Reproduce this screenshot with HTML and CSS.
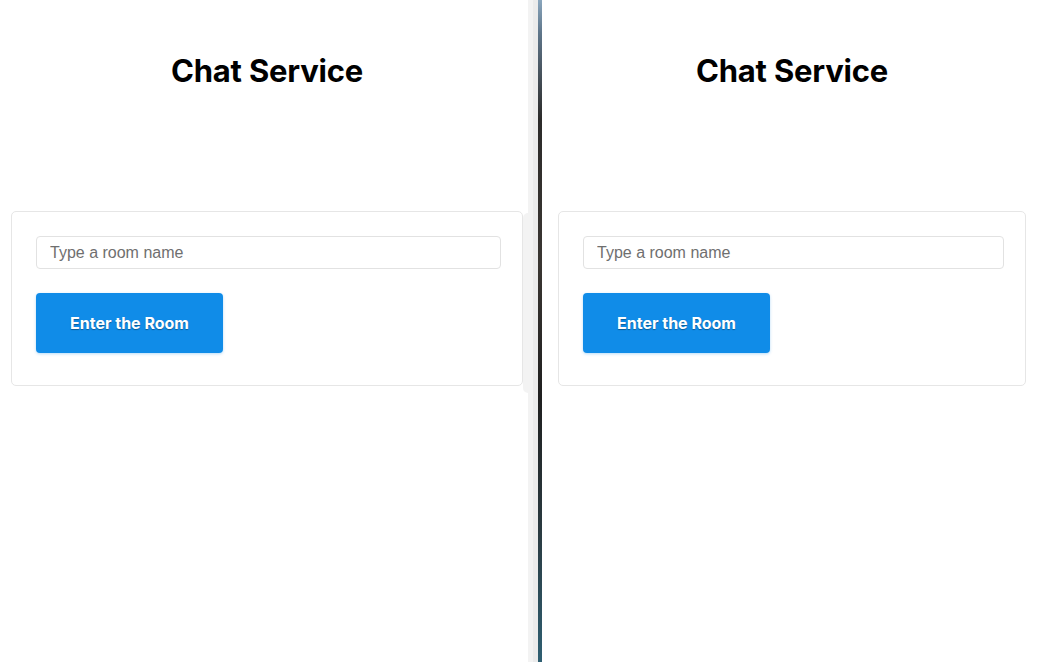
FILE: index.html
```html
<!doctype html>
<html lang="en">
  <head>
    <meta charset="UTF-8" />
    <meta name="viewport" content="width=device-width, initial-scale=1.0" />
    <title>Chat Service</title>
    <link rel="stylesheet" href="styles.css">
  </head>
  <body>
    <div class="desktop">
      <!-- Left window -->
      <div class="window window-left">
        <h1>Chat Service</h1>
        <form class="room-card">
          <input type="text" class="room-input" placeholder="Type a room name" />
          <button type="button" class="room-button">Enter the Room</button>
        </form>
      </div>

      <div class="gutter">
        <span class="gutter-light"></span>
        <span class="gutter-mid"></span>
        <span class="gutter-dark"></span>
      </div>

      <!-- Right window -->
      <div class="window window-right">
        <h1>Chat Service</h1>
        <form class="room-card">
          <input type="text" class="room-input" placeholder="Type a room name" />
          <button type="button" class="room-button">Enter the Room</button>
        </form>
      </div>
    </div>
  </body>
</html>
```

FILE: styles.css
```css
html,
body {
  margin: 0;
  height: 100%;
  background-color: #fff;
}
body {
  font-family: Inter, "Liberation Sans", Arial, sans-serif;
  color: #000;
}
.desktop {
  display: flex;
  height: 662px;
  overflow: hidden;
}
.window {
  background-color: #fff;
  box-sizing: border-box;
}
.window-left {
  width: 528px;
  padding: 0 5px 0 11px;
}
.window-right {
  flex: 1;
  padding: 0 12px 0 16px;
}
.window h1 {
  margin: 0 0 121px;
  padding-top: 51px;
  font-size: 31px;
  line-height: 39px;
  font-weight: 700;
  text-align: center;
  letter-spacing: -0.2px;
}
.gutter {
  position: relative;
  display: flex;
  width: 14px;
}
.gutter::before {
  content: "";
  position: absolute;
  left: -5px;
  top: 213px;
  width: 6px;
  height: 180px;
  background-color: #f3f3f3;
  border-radius: 5px 0 0 5px;
}
.gutter-light {
  width: 5px;
  background-color: #f3f3f3;
}
.gutter-mid {
  width: 5px;
  background-color: #ebebeb;
}
.gutter-dark {
  width: 4px;
  background: linear-gradient(
    to bottom,
    #8aa6bd 0%,
    #5f768a 5%,
    #2c2b2a 18%,
    #3a3632 40%,
    #1f1f1f 60%,
    #2a3a40 80%,
    #2f5f72 100%
  );
}
.room-card {
  border: 1px solid #e6e6e6;
  border-radius: 5px;
  padding: 24px 21px 32px 24px;
}
.room-input {
  display: block;
  box-sizing: border-box;
  width: 100%;
  height: 33px;
  padding: 0 13px;
  border: 1px solid #e2e2e2;
  border-radius: 4px;
  font-family: "Liberation Sans", Arial, sans-serif;
  font-size: 16px;
  color: #333;
  outline: none;
}
.room-input::placeholder {
  color: #6f6f6f;
}
.room-button {
  display: block;
  margin-top: 24px;
  width: 187px;
  height: 60px;
  border: none;
  border-radius: 4px;
  background-color: #108ce8;
  color: #fff;
  font-family: Inter, "Liberation Sans", Arial, sans-serif;
  font-size: 16px;
  font-weight: 700;
  text-shadow: 0 1px 1px rgba(0, 0, 0, 0.35);
  box-shadow: 0 1px 3px rgba(16, 140, 232, 0.3);
  cursor: pointer;
}
```
